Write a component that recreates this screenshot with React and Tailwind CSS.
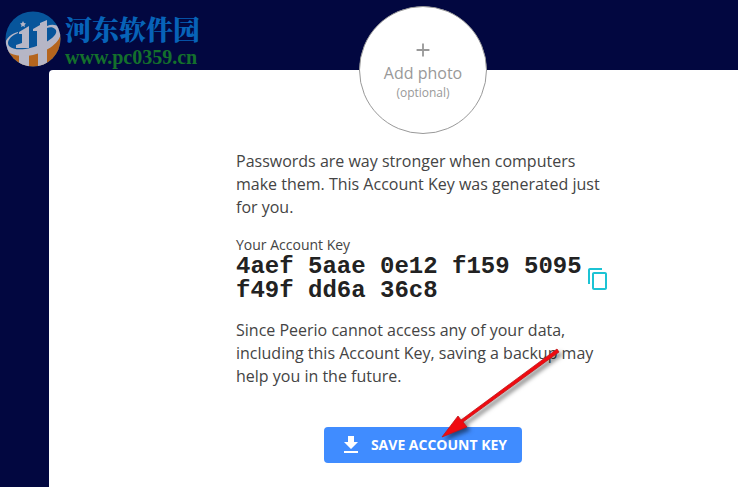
import { MdContentCopy, MdFileDownload, MdAdd } from 'react-icons/md';

const accountKey = '4aef 5aae 0e12 f159 5095 f49f dd6a 36c8';

function SiteLogo() {
  return (
    <svg viewBox="0 0 56 56" className="w-14 h-14 flex-shrink-0" aria-hidden="true">
      <defs>
        <clipPath id="disc">
          <circle cx="28" cy="28" r="27.5" />
        </clipPath>
      </defs>
      <g clipPath="url(#disc)">
        <rect width="56" height="56" fill="#07559b" />
        {/* Lower half */}
        <path d="M0 38 C18 46 44 40 56 21 V56 H0 Z" fill="#b5651e" />
        <path d="M14 42 H24 V56 H14 Z M33 42 L42 36 V56 H33 Z" fill="#b6b6c6" />
        {/* Towers */}
        <path d="M14 21 L24 15 V37 H11 V34 L17 32 V23 H14 Z" fill="#b6b6c6" />
        <path d="M28 18 L35 14 V12 L42 9 V33 L32 37 V20 H28 Z" fill="#b6b6c6" />
        {/* Orbit */}
        <path
          d="M13 22 C5 25 1 31 4 35 C10 41 26 38 37 33 C48 28 54 21 50 18 C48 16 45 16 42 17 V15 C49 12 56 15 56 21 C56 31 42 41 28 44 C14 47 1 43 0 36 C-1 29 5 23 13 21 Z"
          fill="#b6b6c6"
        />
        <path d="M18 10 L19 12 L21 12.500 L19.500 14 L20 16 L18 15 L16 16 L16.500 14 L15 12.500 L17 12 Z" fill="#b6b6c6" />
      </g>
    </svg>
  );
}

function Arrow() {
  return (
    <svg
      viewBox="0 0 124 96"
      className="absolute bottom-5 left-[116px] w-[124px] h-24 pointer-events-none drop-shadow-[3px_3px_2px_rgba(0,0,0,0.5)]"
      aria-hidden="true"
    >
      <path d="M117 2 L119 5 L23 75 L27 80 L2 90 L18 69 L21 73 Z" fill="#f00a10" stroke="#c01418" strokeWidth="0.8" />
    </svg>
  );
}

export default function App() {
  return (
    <div className="relative min-h-screen overflow-hidden bg-[#020740] pt-[70px] pl-[49px] font-['Open_Sans',sans-serif] flex flex-col">
      {/* Site mark */}
      <div className="absolute top-[11px] left-[5px] flex items-start gap-1">
        <SiteLogo />
        <div>
          <p className="font-['Noto_Serif_CJK_SC','Noto_Sans_CJK_SC',serif] text-[27px] leading-9 font-black text-[#0763b8]">
            河东软件园
          </p>
          <p className="font-['Liberation_Serif',serif] text-xl leading-5 font-bold text-[#14702c]">
            www.pc0359.cn
          </p>
        </div>
      </div>

      {/* Card */}
      <main className="flex-1 -mr-[59px] rounded-t bg-white flex flex-col items-center pb-6">
        <button
          type="button"
          className="relative -mt-16 w-32 h-32 rounded-full border border-[#999] bg-white text-[#999] flex flex-col items-center justify-center"
        >
          <MdAdd size={22} />
          <span className="text-base leading-6">Add photo</span>
          <span className="text-xs leading-4">(optional)</span>
        </button>

        <div className="w-[374px] mt-4 text-base leading-[23px] text-[#444]">
          <p>
            Passwords are way stronger when computers make them. This Account Key was generated just for you.
          </p>

          <h2 className="mt-4 text-sm leading-5">Your Account Key</h2>
          <div className="flex items-center gap-1">
            <p className="flex-1 font-['Liberation_Mono',monospace] text-2xl leading-6 font-bold text-[#222]">
              {accountKey}
            </p>
            <button type="button" aria-label="Copy" className="text-[#1cc3d4]">
              <MdContentCopy size={24} />
            </button>
          </div>

          <p className="mt-4">
            Since Peerio cannot access any of your data, including this Account Key, saving a backup may help you in the future.
          </p>
        </div>

        <div className="relative mt-[39px]">
          <button
            type="button"
            className="h-9 px-[15px] rounded bg-[#408cff] text-white text-sm font-bold flex items-center gap-2"
          >
            <MdFileDownload size={24} />
            SAVE ACCOUNT KEY
          </button>
          <Arrow />
        </div>
      </main>
    </div>
  );
}
